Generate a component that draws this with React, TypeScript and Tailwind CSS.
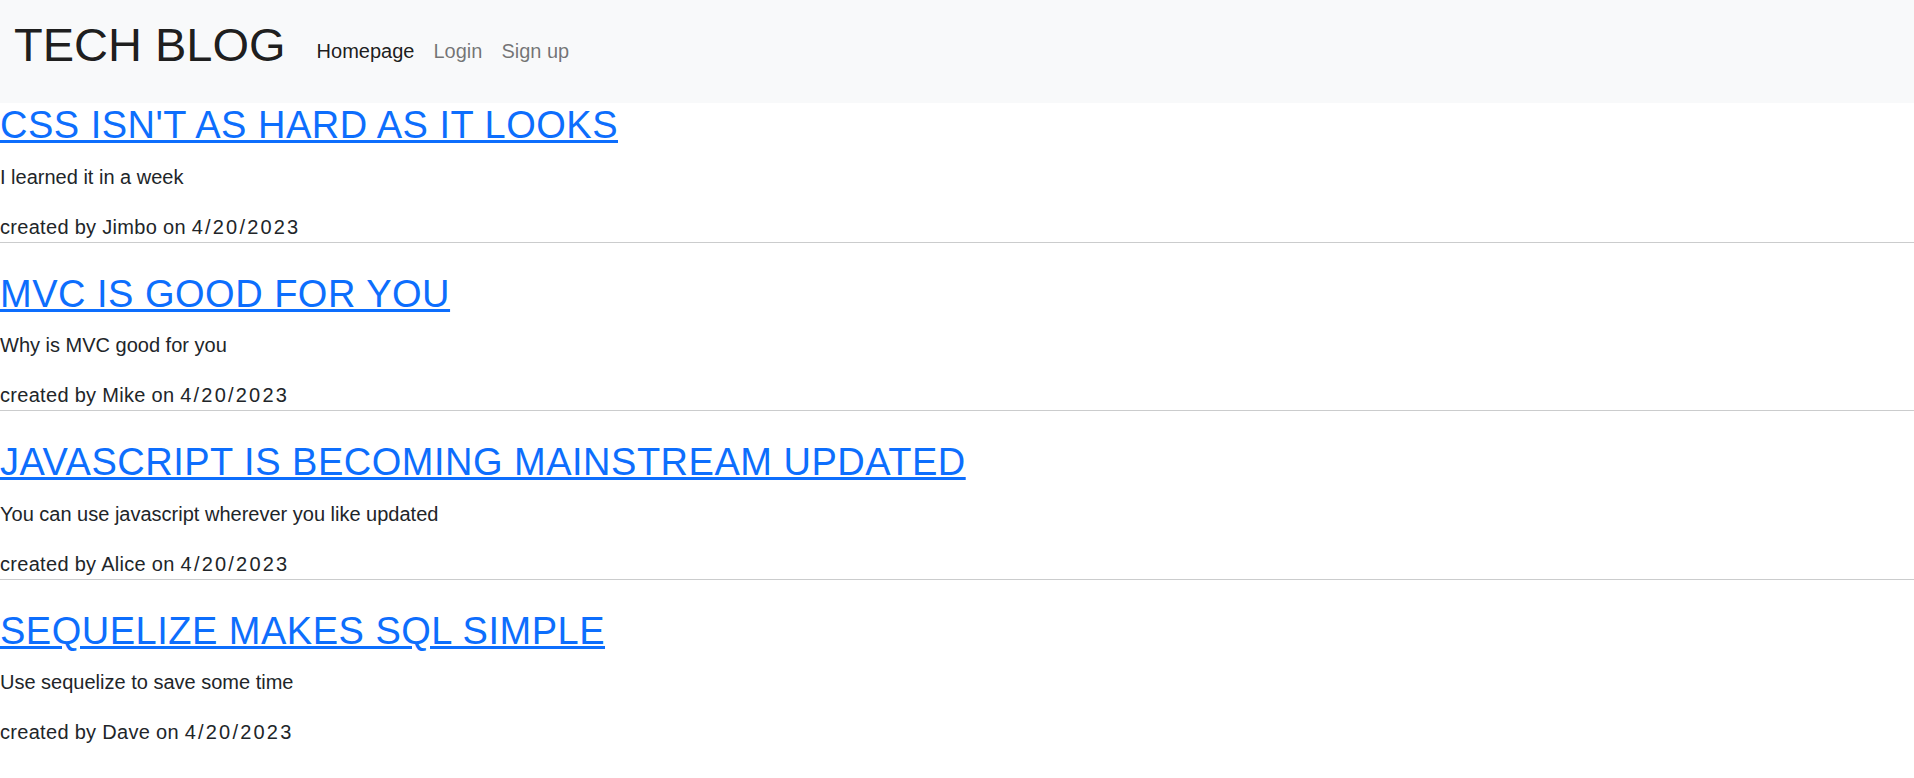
import React from 'react';

type Post = {
  id: number;
  title: string;
  content: string;
  author: string;
  date: string;
};

const posts: Post[] = [
  { id: 1, title: "CSS ISN'T AS HARD AS IT LOOKS", content: 'I learned it in a week', author: 'Jimbo', date: '4/20/2023' },
  { id: 2, title: 'MVC IS GOOD FOR YOU', content: 'Why is MVC good for you', author: 'Mike', date: '4/20/2023' },
  { id: 3, title: 'JAVASCRIPT IS BECOMING MAINSTREAM UPDATED', content: 'You can use javascript wherever you like updated', author: 'Alice', date: '4/20/2023' },
  { id: 4, title: 'SEQUELIZE MAKES SQL SIMPLE', content: 'Use sequelize to save some time', author: 'Dave', date: '4/20/2023' },
];

const navLinks = [
  { label: 'Homepage', active: true },
  { label: 'Login', active: false },
  { label: 'Sign up', active: false },
];

const Navbar: React.FC = () => {
  return (
    <nav className="h-[103px] bg-[#f8f9fa] flex items-start px-[14px]">
      <a href="#" className="mt-[21px] text-[47px] leading-none text-black/90 no-underline whitespace-nowrap">
        TECH BLOG
      </a>
      <ul className="mt-[41px] ml-[31px] flex gap-[19px] list-none">
        {navLinks.map((link) => (
          <li key={link.label}>
            <a
              href="#"
              className={
                link.active
                  ? 'text-[20px] leading-none text-black/90 no-underline'
                  : 'text-[20px] leading-none text-black/55 no-underline'
              }
            >
              {link.label}
            </a>
          </li>
        ))}
      </ul>
    </nav>
  );
};

const PostItem: React.FC<{ post: Post }> = ({ post }) => {
  return (
    <div>
      <h2 className="text-[38px] leading-[1.2] font-normal tracking-[0.5px]">
        <a href="#" className="text-[#0d6efd] underline">
          {post.title}
        </a>
      </h2>
      <p className="mt-[13px] text-[20px] leading-[30px]">{post.content}</p>
      <p className="mt-[20px] text-[20px] leading-[30px] tracking-[0.3px]">
        created by {post.author} on <span className="tracking-[2.2px]">{post.date}</span>
      </p>
    </div>
  );
};

export default function App() {
  return (
    <div className="min-h-screen bg-white text-[#212529] font-['Liberation_Sans',Arial,sans-serif]">
      <Navbar />
      <main>
        {posts.map((post, i) => (
          <React.Fragment key={post.id}>
            {i > 0 && <hr className="border-0 border-t border-[#cbcccd] mb-[29px]" />}
            <PostItem post={post} />
          </React.Fragment>
        ))}
      </main>
    </div>
  );
}
